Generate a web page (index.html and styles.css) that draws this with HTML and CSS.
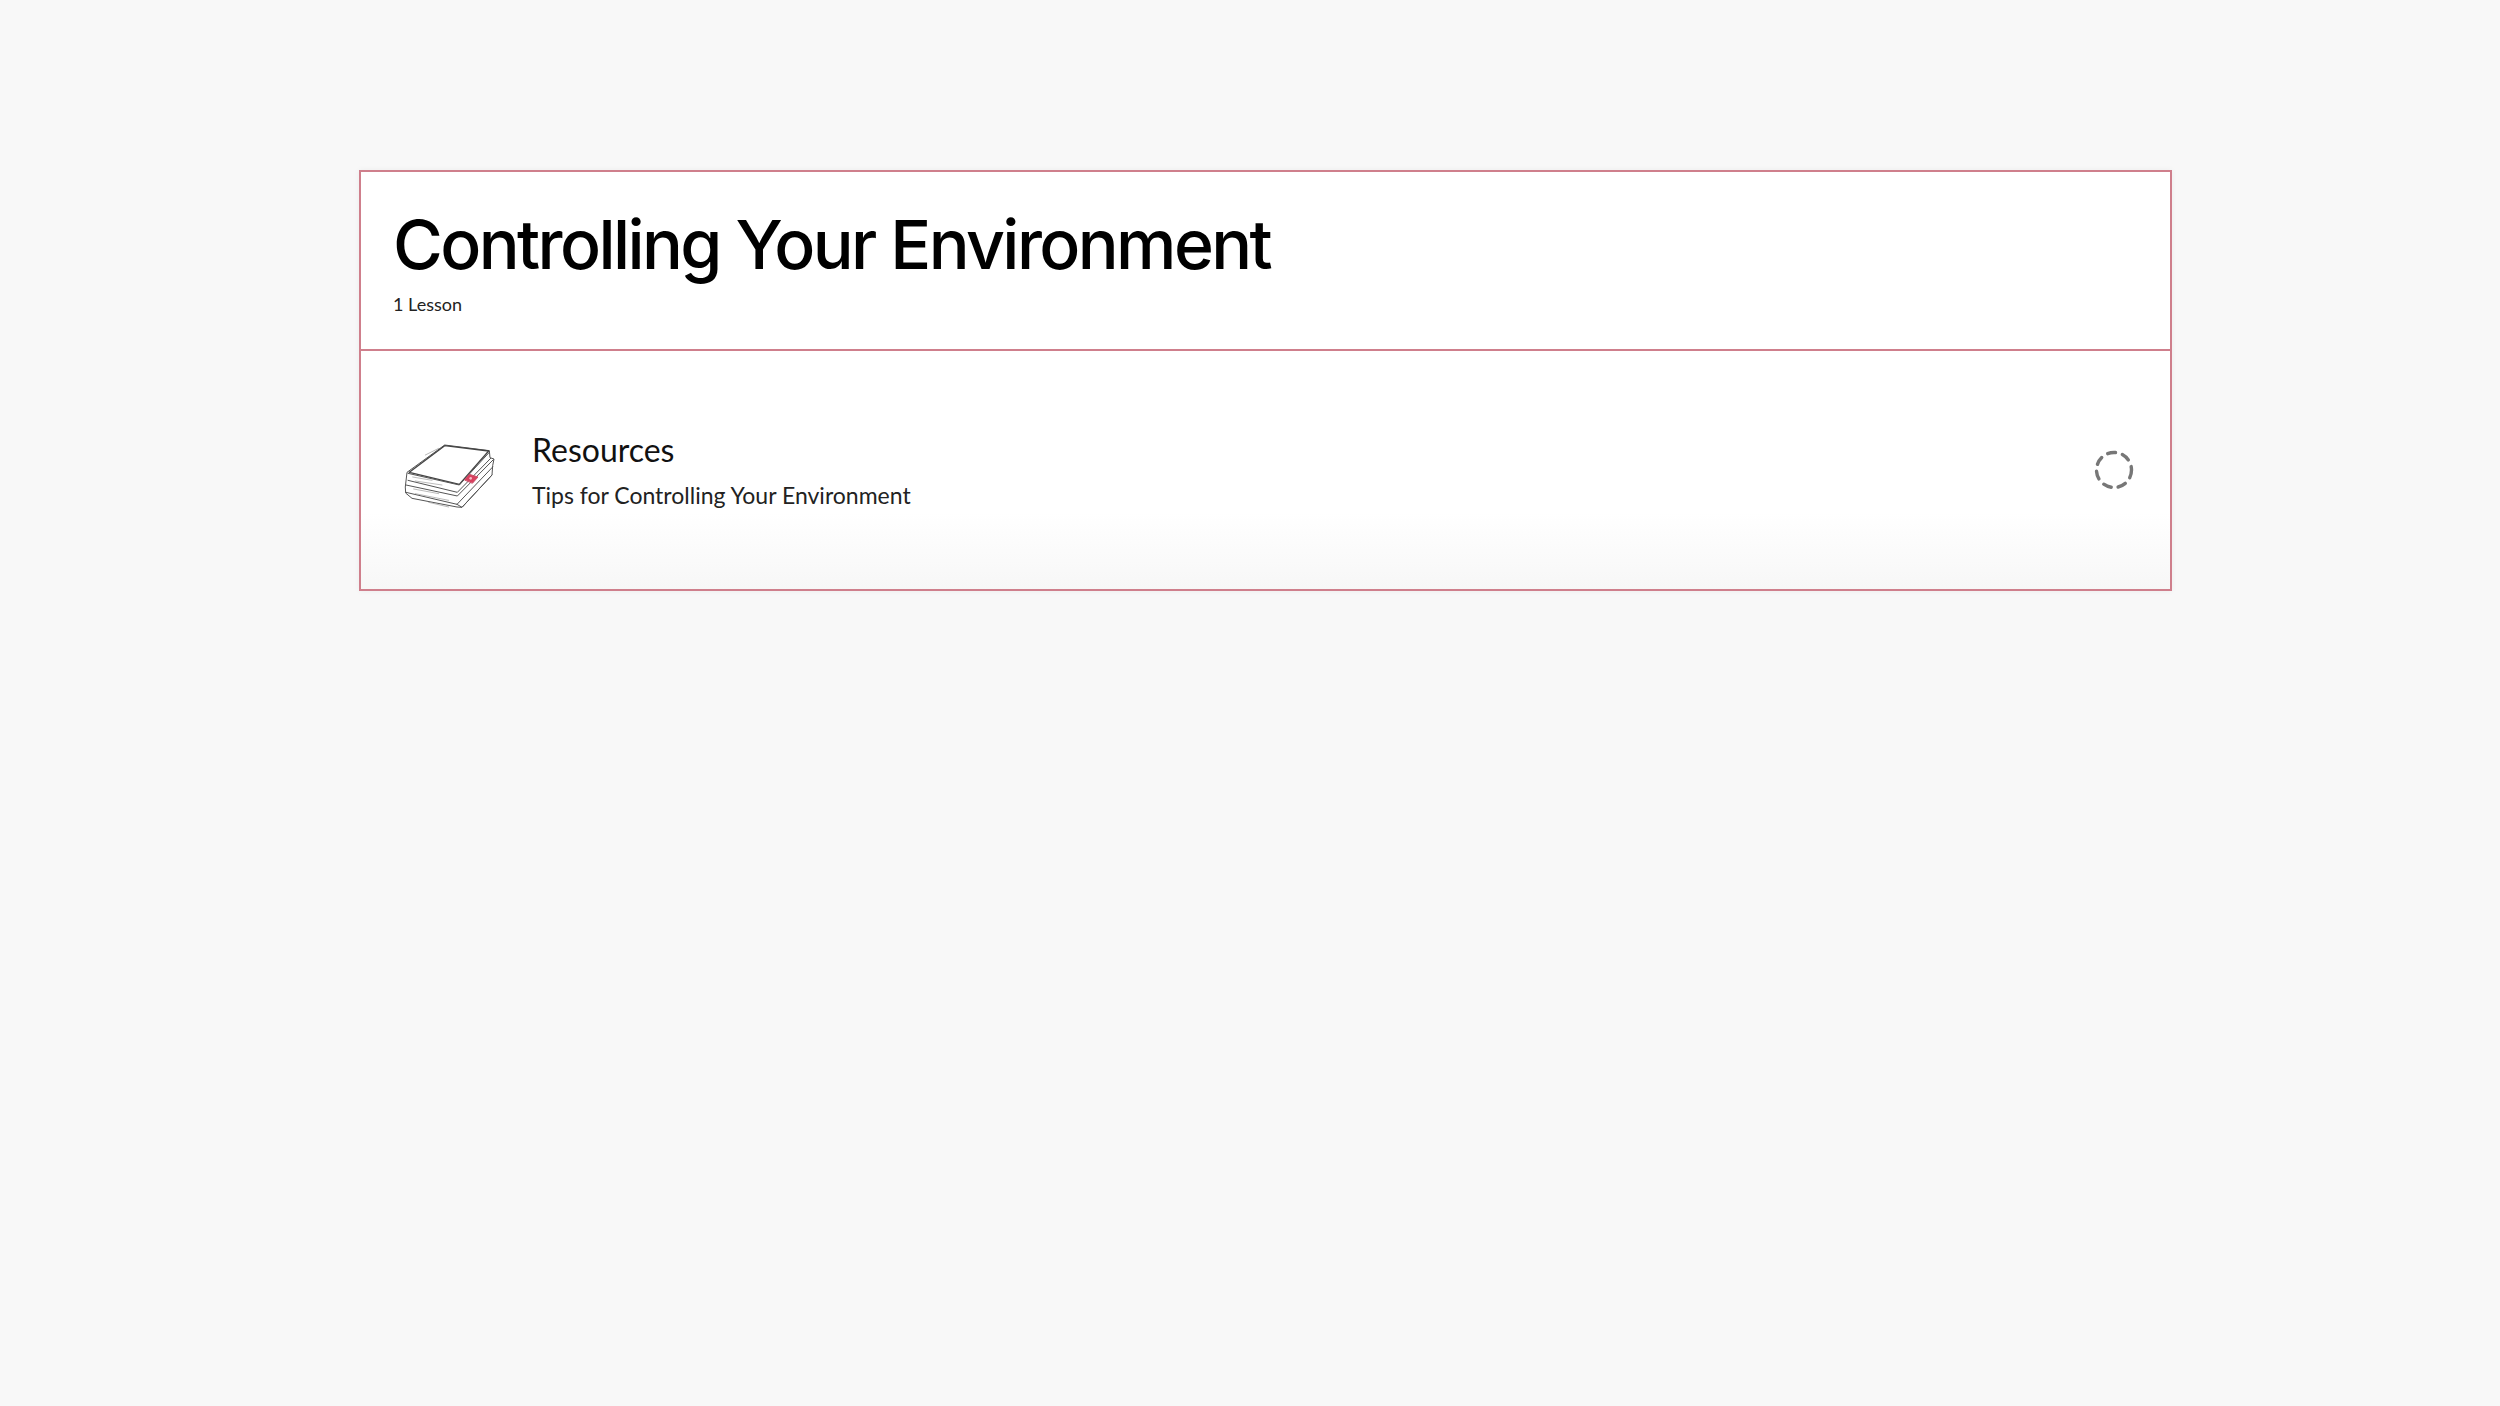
FILE: index.html
```html
<!DOCTYPE html>
<html lang="en">
<head>
    <meta charset="UTF-8">
    <title>Controlling Your Environment</title>
    <link rel="stylesheet" href="styles.css">
</head>
<body>
    <div class="section">
        <div class="section-header">
            <h1>Controlling Your Environment</h1>
            <p class="lesson-count">1 Lesson</p>
        </div>
        <div class="lesson">
            <svg class="lesson-icon" viewBox="0 0 420 330" fill="none" stroke="#555" stroke-width="3" stroke-linejoin="round" stroke-linecap="round">
                <path d="M70 215 L75 172 L188 90 L322 107 L324 128 L336 132 L332 152 L330 180 L240 277 L225 276 L90 250 L72 235 Z" fill="#fff"/>
                <path d="M82 172 L188 92 L320 108 L232 208 Z" fill="#fff" stroke="#444" stroke-width="4"/>
                <path d="M78 175 L232 210 L322 112 M78 196 L226 232 L326 130 M72 210 L226 243 L334 134 M72 232 L225 268 L332 156 M225 268 L240 277 L330 180"/>
                <path d="M92 186 L150 196 M100 198 L180 210 M95 222 L170 236 M100 236 L200 256 M140 262 L200 276 M130 120 L170 100" stroke="#999" stroke-width="2"/>
                <path d="M248 194 L262 178 L288 186 L272 204 Z" fill="#d9415f" stroke="#c9506a" stroke-width="3"/>
                <circle cx="266" cy="190" r="4" fill="#f3b9c5" stroke="none"/>
            </svg>
            <div class="lesson-text">
                <h2>Resources</h2>
                <p>Tips for Controlling Your Environment</p>
            </div>
            <svg class="status-icon" viewBox="0 0 40 40" fill="none">
                <circle cx="20" cy="20" r="17.5" stroke="#777" stroke-width="3.4" stroke-linecap="round" stroke-dasharray="8 7.1"/>
            </svg>
        </div>
    </div>
</body>
</html>
```

FILE: styles.css
```css
* {
    margin: 0;
    padding: 0;
    box-sizing: border-box;
}

body {
    font-family: 'Lato', 'Noto Sans', sans-serif;
    background: #f8f8f8;
    min-height: 100vh;
    padding: 170px 328px 0 359px;
    color: #111;
}

.section {
    border: 2px solid #cf7f8c;
    background: #fff;
    box-shadow: 0 0 6px rgba(0, 0, 0, 0.05);
}

.section-header {
    height: 179px;
    padding: 31px 32px 0;
    border-bottom: 2px solid #cf7f8c;
}

h1 {
    font-family: 'Inter', sans-serif;
    font-size: 68px;
    font-weight: 500;
    line-height: 82px;
    letter-spacing: -2.6px;
    color: #000;
}

.lesson-count {
    font-size: 18px;
    line-height: 24px;
    margin-top: 7px;
    color: #222;
}

.lesson {
    height: 238px;
    display: flex;
    align-items: center;
    padding: 0 36px 0 41px;
    background: linear-gradient(180deg, #fff 0%, #fff 68%, #f7f7f7 100%);
}

.lesson-icon {
    width: 140px;
    height: 110px;
    margin: 0 0 0 -20px;
    flex-shrink: 0;
}

.lesson-text {
    flex: 1;
    margin-left: 10px;
}

h2 {
    font-size: 32px;
    font-weight: 400;
    line-height: 40px;
    color: #111;
}

.lesson-text p {
    font-size: 23px;
    line-height: 30px;
    margin-top: 10px;
    color: #222;
}

.status-icon {
    width: 40px;
    height: 40px;
    flex-shrink: 0;
}
```
